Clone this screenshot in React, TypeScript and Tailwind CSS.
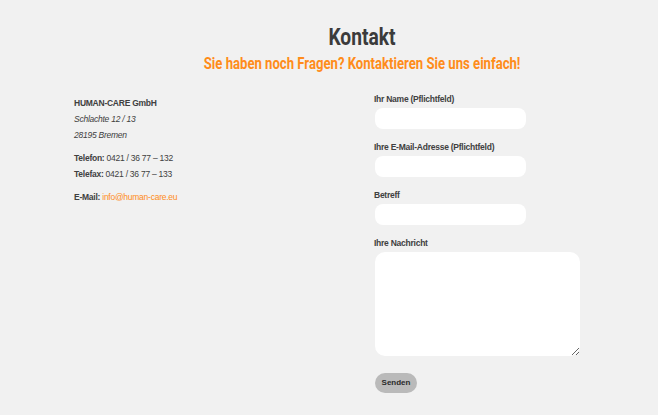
export default function App() {
  return (
    <div className="min-h-[415px] w-full bg-[#f1f1f1] font-['Liberation_Sans',Arial,sans-serif] text-[#404040]">
      <header className="flex flex-col items-center pt-[24px] pl-[66px]">
        <h1 className="origin-center scale-x-[0.8] font-['Roboto',sans-serif] text-[24px] leading-[26px] font-bold text-[#3b3b3b]">
          Kontakt
        </h1>
        <p className="mt-[5px] origin-center scale-x-[0.82] whitespace-nowrap font-['Roboto',sans-serif] text-[16px] leading-[18px] font-bold text-[#ff8c1a]">
          Sie haben noch Fragen? Kontaktieren Sie uns einfach!
        </p>
      </header>

      <div className="mt-[18px] grid grid-cols-[300px_1fr] pl-[74px] text-[8.5px] tracking-[-0.25px]">
        {/* Adresse */}
        <div className="pt-[4px] leading-[16px]">
          <p className="font-bold">HUMAN-CARE GmbH</p>
          <p className="italic">Schlachte 12 / 13</p>
          <p className="italic">28195 Bremen</p>
          <p className="mt-[7px]">
            <b>Telefon:</b> 0421 / 36 77 – 132
          </p>
          <p>
            <b>Telefax:</b> 0421 / 36 77 – 133
          </p>
          <p className="mt-[7px]">
            <b>E-Mail:</b>{" "}
            <a href="#" className="text-[#ff8c1a]">
              info@human-care.eu
            </a>
          </p>
        </div>

        {/* Formular */}
        <form className="flex flex-col pt-[2px]">
          <label className="font-bold leading-[12px]">Ihr Name (Pflichtfeld)</label>
          <input className="mt-[3px] ml-px h-[21px] w-[151px] rounded-[8px] bg-white outline-none" />

          <label className="mt-[12px] font-bold leading-[12px]">Ihre E-Mail-Adresse (Pflichtfeld)</label>
          <input className="mt-[3px] ml-px h-[21px] w-[151px] rounded-[8px] bg-white outline-none" />

          <label className="mt-[12px] font-bold leading-[12px]">Betreff</label>
          <input className="mt-[3px] ml-px h-[21px] w-[151px] rounded-[8px] bg-white outline-none" />

          <label className="mt-[12px] font-bold leading-[12px]">Ihre Nachricht</label>
          <textarea className="mt-[3px] ml-px h-[104px] w-[205px] rounded-[10px] bg-white outline-none" />

          <button
            type="button"
            className="mt-[17px] ml-px h-[20px] w-[42px] rounded-full bg-[#bababa] text-[8px] font-semibold tracking-normal text-[#2a2a2a]"
          >
            Senden
          </button>
        </form>
      </div>
    </div>
  );
}
